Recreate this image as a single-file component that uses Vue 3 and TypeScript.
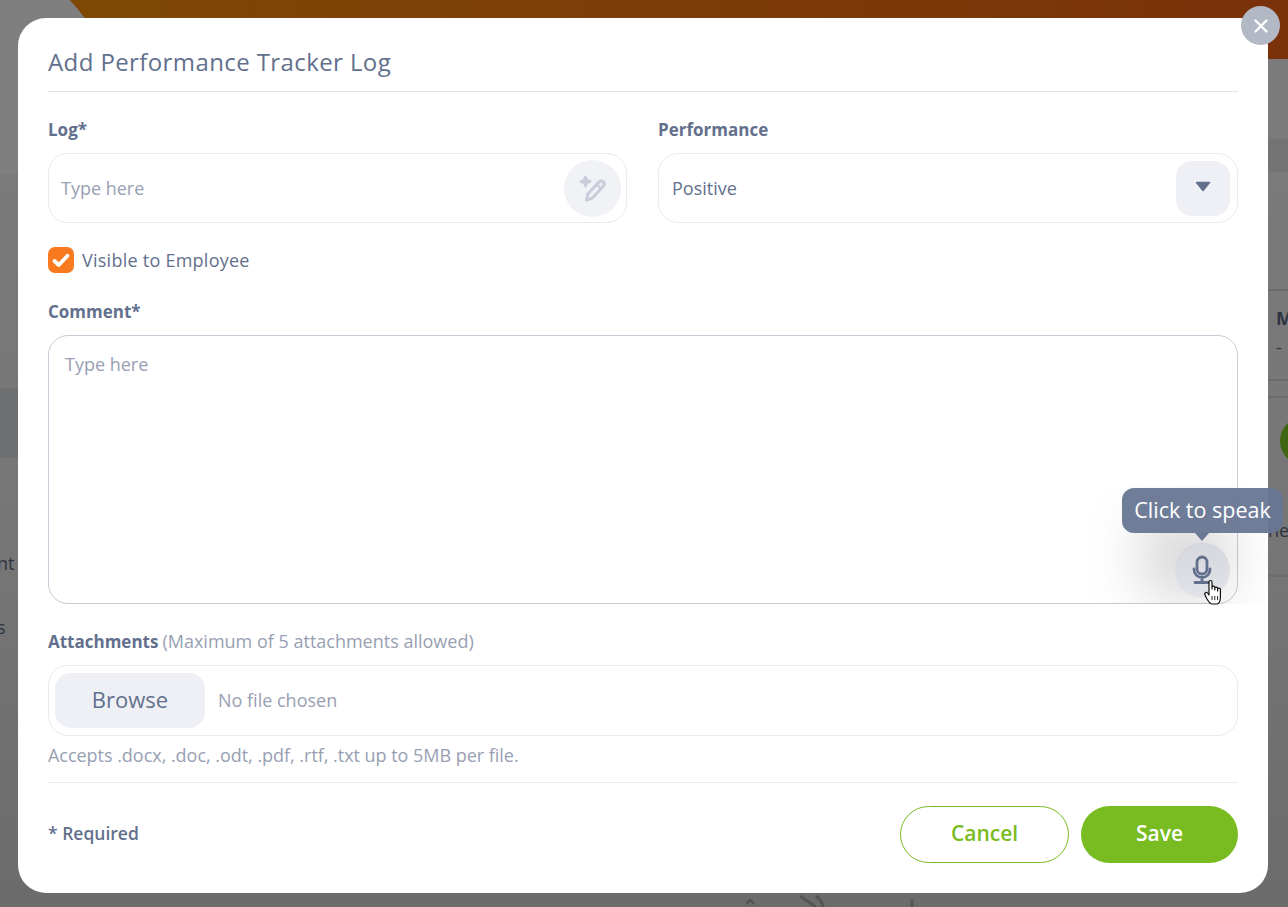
<script setup lang="ts">
import { ref } from 'vue'

const log = ref<string>('')
const comment = ref<string>('')
const visible = ref<boolean>(true)
</script>

<template>
  <div class="page">
    <div class="backdrop" aria-hidden="true">
      <div class="bd-band"></div>
      <div class="bd-corner"></div>
      <div class="bd-strip-right"></div>
      <div class="bd-line l1"></div>
      <div class="bd-line l2"></div>
      <div class="bd-line l3"></div>
      <div class="bd-line l4"></div>
      <div class="bd-left-block"></div>
      <div class="bd-circle"></div>
      <span class="bd-text t1">M</span>
      <span class="bd-text t2">-</span>
      <span class="bd-text t3">ne</span>
      <span class="bd-text t4">nt</span>
      <span class="bd-text t5">s</span>
      <svg class="bd-bottom" width="200" height="14" viewBox="0 0 200 14">
        <path d="M0 11 4 7 8 11" fill="none" stroke="#4f4f4f" stroke-width="2" />
        <path d="M54 3 70 14M70 3Q76 7 77 14M166 6V14" fill="none" stroke="#555" stroke-width="3" />
      </svg>
    </div>

    <section class="modal">
      <button class="close" type="button" aria-label="Close">
        <svg width="16" height="16" viewBox="0 0 16 16">
          <path d="M2.5 2.5 13.5 13.5M13.5 2.5 2.5 13.5" stroke="#fff" stroke-width="2.4" stroke-linecap="round" />
        </svg>
      </button>

      <h2 class="title">Add Performance Tracker Log</h2>

      <div class="row">
        <div class="field">
          <label class="label">Log*</label>
          <div class="box">
            <input v-model="log" class="input" type="text" placeholder="Type here" />
            <span class="ai-btn">
              <svg width="30" height="30" viewBox="0 0 30 30" fill="none">
                <path d="M7.500 3.500 9 7 12.500 8.500 9 10 7.500 13.500 6 10 2.500 8.500 6 7Z" fill="#c9cdd9" stroke="#c9cdd9" stroke-width="2" stroke-linejoin="round" />
                <path d="M8.500 27 9.800 21 21.200 8.800a3 3 0 0 1 4.400 4L14.200 25.200Z" stroke="#c9cdd9" stroke-width="3" stroke-linejoin="round" />
                <path d="M18.800 11.500 23.300 15.800" stroke="#c9cdd9" stroke-width="2.400" />
              </svg>
            </span>
          </div>
        </div>
        <div class="field">
          <label class="label">Performance</label>
          <div class="box">
            <span class="value">Positive</span>
            <span class="caret">
              <svg width="16" height="11" viewBox="0 0 16 11">
                <path d="M1.500 1.500H14.500L8 9.500Z" fill="#63708d" stroke="#63708d" stroke-width="1.500" stroke-linejoin="round" />
              </svg>
            </span>
          </div>
        </div>
      </div>

      <label class="check">
        <input v-model="visible" class="native" type="checkbox" />
        <span class="tick">
          <svg width="18" height="15" viewBox="0 0 18 15" fill="none">
            <path d="M2.500 8 6.800 12 15.500 2.800" stroke="#fff" stroke-width="3.800" stroke-linecap="round" stroke-linejoin="round" />
          </svg>
        </span>
        <span>Visible to Employee</span>
      </label>

      <label class="label comment-label">Comment*</label>
      <div class="area-wrap">
        <textarea v-model="comment" class="area" placeholder="Type here"></textarea>
        <div class="mic-glow"></div>
        <button class="mic" type="button" aria-label="Click to speak">
          <svg width="24" height="30" viewBox="0 0 24 30" fill="none">
            <rect x="7" y="2" width="10" height="17" rx="5" stroke="#63708d" stroke-width="2.800" />
            <path d="M4 14C4 19 7.500 22.500 12 22.500S20 19 20 14M12 22.500V27M5 27.500H19" stroke="#63708d" stroke-width="2.800" stroke-linecap="round" />
          </svg>
        </button>
        <div class="tooltip">Click to speak<span class="arrow"></span></div>
        <svg class="cursor" width="19" height="26" viewBox="0 0 19 26">
          <path d="M5 13V3a1.500 1.500 0 0 1 3 0v7V8.500a1.400 1.400 0 0 1 2.800 0V11V9.500a1.400 1.400 0 0 1 2.800 0V12V10.500a1.400 1.400 0 0 1 2.800 0V18C16.400 22 15 24.500 13 25H7.500C5.500 24.500 4.500 22.500 3 20L1 16C0 14 2.500 12.500 3.500 14L5 16Z" fill="#fff" stroke="#111" stroke-width="1.200" stroke-linejoin="round" />
          <path d="M8 17V21M10.800 17V21M13.600 17V21" stroke="#111" stroke-width=".9" />
        </svg>
      </div>

      <div class="attach-label">
        <span class="label-inline">Attachments</span>
        <span class="muted">(Maximum of 5 attachments allowed)</span>
      </div>
      <div class="file">
        <button class="browse" type="button">Browse</button>
        <span class="muted">No file chosen</span>
      </div>
      <p class="hint">Accepts .docx, .doc, .odt, .pdf, .rtf, .txt up to 5MB per file.</p>

      <footer class="footer">
        <span class="required">* Required</span>
        <div class="actions">
          <button class="btn cancel" type="button">Cancel</button>
          <button class="btn save" type="button">Save</button>
        </div>
      </footer>
    </section>
  </div>
</template>

<style>
html,
body {
  margin: 0;
  padding: 0;
}
</style>

<style scoped>
* {
  box-sizing: border-box;
}
.page {
  position: relative;
  width: 1288px;
  height: 907px;
  padding: 18px 20px 14px 18px;
  overflow: hidden;
  background: linear-gradient(180deg, #7c7c7c 0%, #767676 60%, #6b6b6b 100%);
  font-family: "Open Sans", "Lato", sans-serif;
  color: #63708d;
}
.backdrop {
  position: absolute;
  inset: 0;
}
.bd-band {
  position: absolute;
  left: 0;
  top: 0;
  right: 0;
  height: 59px;
  background: linear-gradient(90deg, #7e4a04 0%, #7a310a 100%);
}
.bd-corner {
  position: absolute;
  left: -102px;
  top: -28px;
  width: 203px;
  height: 203px;
  border-radius: 50%;
  background: #7f7f7f;
}
.bd-strip-right {
  position: absolute;
  left: 1268px;
  right: 0;
  top: 139px;
  height: 33px;
  background: #737373;
}
.bd-line {
  position: absolute;
  left: 1268px;
  right: 0;
  height: 2px;
  background: #6c6c6c;
}
.l1 {
  top: 289px;
}
.l2 {
  top: 379px;
}
.l3 {
  top: 396px;
}
.l4 {
  top: 574px;
  height: 3px;
}
.bd-left-block {
  position: absolute;
  left: 0;
  top: 388px;
  width: 18px;
  height: 70px;
  background: #6e6f70;
}
.bd-circle {
  position: absolute;
  left: 1280px;
  top: 417px;
  width: 48px;
  height: 48px;
  border-radius: 50%;
  background: #3f6610;
}
.bd-text {
  position: absolute;
  font-size: 18px;
  line-height: 22px;
  color: #2c3442;
}
.t1 {
  left: 1276px;
  top: 307px;
  font-weight: 700;
  width: 12px;
  overflow: hidden;
}
.t2 {
  left: 1276px;
  top: 336px;
}
.t3 {
  left: 1268px;
  top: 519px;
}
.t4 {
  left: -3px;
  top: 552px;
}
.t5 {
  left: -3px;
  top: 616px;
}
.bd-bottom {
  position: absolute;
  left: 746px;
  top: 893px;
}
.modal {
  position: relative;
  width: 1250px;
  height: 875px;
  padding: 24px 30px 0;
  background: #fff;
  border-radius: 28px;
}
.close {
  position: absolute;
  top: -12px;
  right: -12px;
  width: 39px;
  height: 39px;
  padding: 0;
  border: 0;
  border-radius: 50%;
  background: #b3b8c5;
  display: flex;
  align-items: center;
  justify-content: center;
}
.title {
  margin: 0;
  height: 50px;
  padding-top: 3px;
  border-bottom: 1px solid #e2e3e7;
  font-size: 24px;
  line-height: 34px;
  font-weight: 400;
  letter-spacing: 0.4px;
  color: #63708d;
}
.row {
  display: grid;
  grid-template-columns: 579px 580px;
  gap: 31px;
  margin-top: 25px;
}
.label,
.label-inline {
  font-size: 17px;
  line-height: 24px;
  font-weight: 700;
  color: #63708d;
}
.label {
  display: block;
  height: 24px;
  padding-top: 1px;
}
.box {
  display: flex;
  align-items: center;
  justify-content: space-between;
  height: 70px;
  margin-top: 12px;
  padding: 0 7px 0 12px;
  border: 1px solid #e9eaee;
  border-radius: 20px;
}
.input {
  flex: 1;
  min-width: 0;
  border: 0;
  outline: 0;
  padding: 0;
  font: inherit;
  font-size: 18px;
  color: #63708d;
}
.input::placeholder,
.area::placeholder {
  color: #98a0b3;
  opacity: 1;
}
.ai-btn {
  display: flex;
  align-items: center;
  justify-content: center;
  width: 57px;
  height: 57px;
  margin-right: -2px;
  border-radius: 50%;
  background: #f1f2f6;
}
.value {
  font-size: 18px;
  margin-left: 1px;
}
.caret {
  display: flex;
  align-items: center;
  justify-content: center;
  width: 54px;
  height: 55px;
  padding-bottom: 3px;
  border-radius: 16px;
  background: #eff0f5;
}
.check {
  display: flex;
  align-items: center;
  gap: 8px;
  height: 26px;
  margin-top: 24px;
  font-size: 18px;
  letter-spacing: 0.25px;
  color: #63708d;
}
.native {
  position: absolute;
  opacity: 0;
  width: 0;
  height: 0;
}
.tick {
  display: flex;
  align-items: center;
  justify-content: center;
  width: 26px;
  height: 26px;
  border-radius: 7px;
  background: #f9791e;
}
.comment-label {
  margin-top: 26px;
}
.area-wrap {
  position: relative;
  height: 269px;
  margin-top: 12px;
}
.area {
  display: block;
  width: 100%;
  height: 100%;
  padding: 16px 16px;
  border: 1px solid #c9ccd6;
  border-radius: 20px;
  outline: 0;
  resize: none;
  font: inherit;
  font-size: 18px;
  line-height: 24px;
  color: #63708d;
}
.mic-glow {
  position: absolute;
  right: 8px;
  bottom: 6px;
  width: 56px;
  height: 56px;
  border-radius: 50%;
  box-shadow: -16px -14px 64px 14px rgba(0, 0, 0, 0.21);
  clip-path: inset(-56px -38px -6px -140px);
}
.mic {
  position: absolute;
  right: 8px;
  bottom: 6px;
  display: flex;
  align-items: center;
  justify-content: center;
  width: 56px;
  height: 56px;
  padding: 0;
  border: 0;
  border-radius: 50%;
  background: linear-gradient(180deg, #d5d7dd, #e1e3e8);
}
.tooltip {
  position: absolute;
  left: 1074px;
  top: 153px;
  width: 161px;
  height: 45px;
  border-radius: 12px;
  background: rgba(104, 118, 148, 0.95);
  color: #fff;
  font-size: 21.5px;
  line-height: 43px;
  text-align: center;
  white-space: nowrap;
}
.arrow {
  position: absolute;
  left: 73px;
  top: 45px;
  width: 0;
  height: 0;
  border-left: 7px solid transparent;
  border-right: 7px solid transparent;
  border-top: 8px solid #6b7793;
}
.cursor {
  position: absolute;
  left: 1156px;
  top: 244px;
}
.attach-label {
  display: flex;
  align-items: baseline;
  gap: 4px;
  height: 24px;
  margin-top: 25px;
  line-height: 24px;
}
.muted {
  font-size: 18px;
  line-height: 24px;
  color: #98a0b3;
}
.file {
  display: flex;
  align-items: center;
  gap: 13px;
  height: 71px;
  margin-top: 12px;
  padding: 0 6px;
  border: 1px solid #e9eaee;
  border-radius: 20px;
}
.file .muted {
  margin-top: -2px;
}
.browse {
  width: 150px;
  height: 55px;
  padding: 0 0 3px;
  border: 0;
  border-radius: 16px;
  background: #eff0f5;
  color: #63708d;
  font: inherit;
  font-size: 22px;
}
.hint {
  margin: 7px 0 0;
  font-size: 18px;
  letter-spacing: -0.03px;
  line-height: 24px;
  color: #98a0b3;
}
.footer {
  display: flex;
  align-items: center;
  justify-content: space-between;
  margin-top: 15px;
  padding-top: 23px;
  border-top: 1px solid #e9eaee;
}
.required {
  font-size: 17.5px;
  font-weight: 600;
  color: #63708d;
  margin-top: -3px;
}
.actions {
  display: flex;
  gap: 12px;
}
.btn {
  height: 57px;
  border-radius: 29px;
  font: inherit;
  font-size: 21px;
  font-weight: 600;
  padding: 0 0 3px;
}
.cancel {
  width: 169px;
  background: #fff;
  border: 1px solid #79bc21;
  color: #79bc21;
}
.save {
  width: 157px;
  background: #79bc21;
  border: 0;
  color: #fff;
}
</style>
